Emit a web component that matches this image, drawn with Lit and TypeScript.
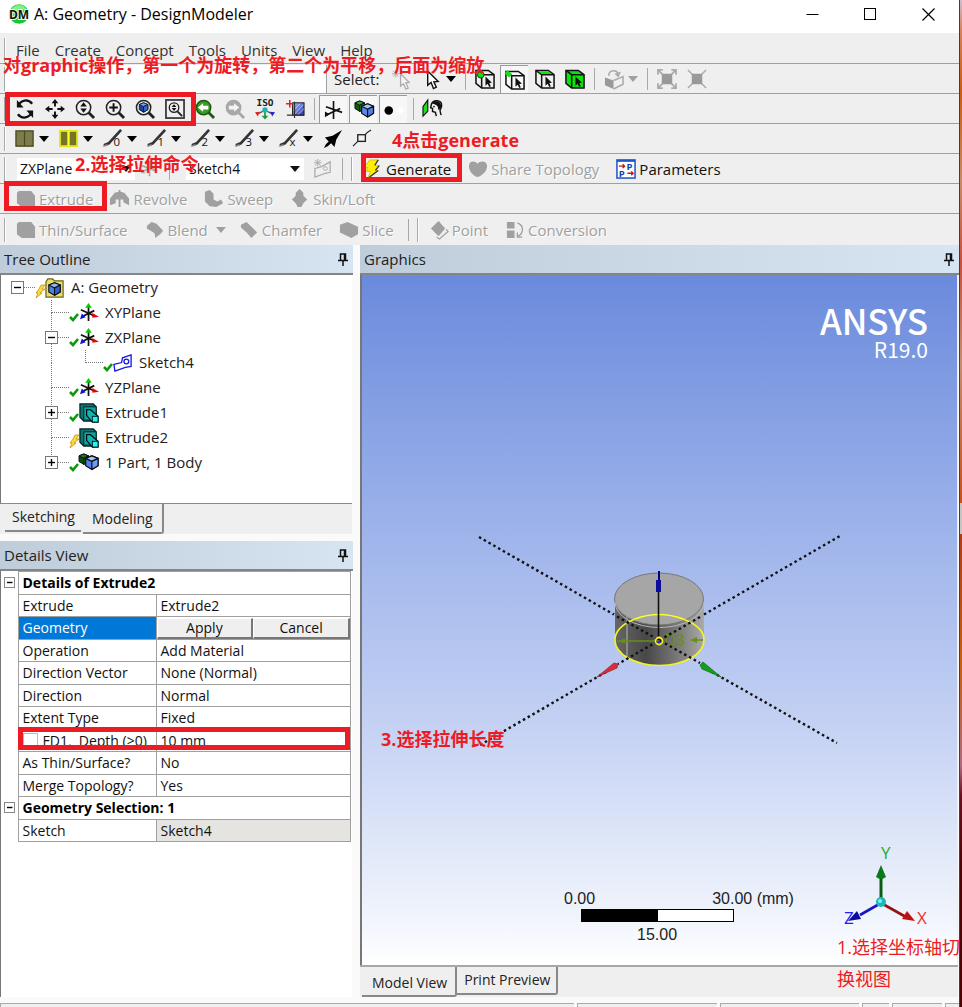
import { LitElement, html, svg, css, nothing } from "lit";
import { customElement } from "lit/decorators.js";

/* ---------- icon fragments ---------- */

const glass = (inner: unknown, ring = "#222", fill = "#efefef") => svg`
  <path d="M14 14 L20 20" stroke=${ring} stroke-width="3"/>
  <circle cx="9" cy="9" r="7.5" fill=${fill} stroke=${ring} stroke-width="1.6"/>${inner}`;

const cubeFace = (x: number, y: number, top: string, left: string, right: string, s = 1) => svg`
  <g transform="translate(${x} ${y}) scale(${s})" stroke="#111" stroke-width="1" stroke-linejoin="round">
    <path d="M5 0 L10 2 L10 8 L5 11 L0 8 L0 2Z" fill=${left}/>
    <path d="M5 0 L10 2 L5 4.5 L0 2Z" fill=${top}/>
    <path d="M5 4.5 L10 2 L10 8 L5 11Z" fill=${right}/>
  </g>`;

const selBox = (extra: unknown, fill = "none") => svg`
  <path d="M1 6 L1 1.5 L14 1.5 L20 6 L20 20 L7 20 L1 15Z" fill=${fill} stroke="#111" stroke-width="1.6"/>
  <path d="M1 1.5 L7 6 L20 6 M7 6 L7 20" fill="none" stroke="#111" stroke-width="1.6"/>${extra}
  <path d="M11 8 L11 17.5 L13.2 15.5 L15 19 L16.6 18 L15 14.8 L17.8 14.5Z" fill="#111"/>`;

const sketchLine = (n: string) => svg`
  <path d="M1 17 L6 15 L19 1" fill="none" stroke="#333" stroke-width="2.8"/>
  <path d="M0 18 L5 16.5" stroke="#888" stroke-width="1.5"/>
  <text x="11" y="18" font-size="12" font-family="Open Sans" fill="#111">${n}</text>`;

const icons: Record<string, unknown> = {
  rotate: svg`<path d="M3 8 C6 0 14 0 18 5" fill="none" stroke="#111" stroke-width="2.4"/><path d="M2 1 L2 9 L9 9Z" fill="#111"/>
    <path d="M18 13 C15 21 7 21 3 16" fill="none" stroke="#111" stroke-width="2.4"/><path d="M19 20 L19 12 L12 12Z" fill="#111"/>`,
  pan: svg`<path d="M10.5 4V8M10.5 13V17M4 10.5H8M13 10.5H17" stroke="#111" stroke-width="2"/>
    <path d="M10.5 0L7 4.5H14ZM10.5 21L7 16.5H14ZM0 10.5L4.5 7V14ZM21 10.5L16.5 7V14Z" fill="#111"/>`,
  zoomud: glass(svg`<path d="M9 3.5L12.5 8H5.5ZM9 14.5L12.5 10H5.5Z" fill="#111"/>`),
  zoomin: glass(svg`<path d="M9 4.5V13.5M4.5 9H13.5" stroke="#111" stroke-width="2"/>`),
  zoomcube: glass(cubeFace(4.5, 4, "#6fa0ff", "#1c3f9c", "#3568d8", 0.9)),
  zoomfit: svg`<rect x="1" y="1" width="19" height="19" fill="none" stroke="#333" stroke-width="1.8"/>
    <circle cx="9.5" cy="9" r="5" fill="none" stroke="#222" stroke-width="1.4"/><path d="M13 13L18 18" stroke="#222" stroke-width="2"/>
    <path d="M9.5 5.5L12 8.5H7ZM9.5 12.5L12 9.5H7Z" fill="#111"/>`,
  prev: glass(svg`<path d="M3 9L8.5 4.5V7H14V11H8.5V13.5Z" fill="#fff"/>`, "#1d5a12", "#3c9b22"),
  next: glass(svg`<path d="M15 9L9.5 4.5V7H4V11H9.5V13.5Z" fill="#f4f4f4"/>`, "#a8a8a8", "#a8a8a8"),
  iso: svg`<text x="10.5" y="7" text-anchor="middle" font-size="10" font-weight="bold" font-family="DejaVu Sans Mono" fill="#222">ISO</text>
    <path d="M10.5 12V19" stroke="#1a9a3a" stroke-width="1.8"/><path d="M10.5 21.5L7 17.5H14Z" fill="#1a9a3a"/>
    <circle cx="10.5" cy="11.5" r="2.8" fill="#17b6b6"/><path d="M8 13L4 15M13 13L17 15" stroke="#555" stroke-width="1.4"/>
    <path d="M0 14L5 13.5L3 18.5Z" fill="#d22"/><path d="M21 14L16 13.5L18 18.5Z" fill="#22c"/>`,
  lookat: svg`<defs><linearGradient id="lk" x2="1" y2="1"><stop offset="0" stop-color="#a9bcf5"/><stop offset="1" stop-color="#2a35b0"/></linearGradient></defs>
    <rect x="8" y="4" width="12" height="13" fill="url(#lk)" stroke="#111"/><path d="M10 16L19 6M13 17L20 10M9 12L16 5" stroke="#c4d2ff" stroke-width=".8"/>
    <path d="M10 3V20M2 17H20" stroke="#333" stroke-width="1.2"/><path d="M5 1V9M1 5H9" stroke="#d22" stroke-width="1.6"/>`,
  axes: svg`<path d="M10 1V20M2 7L19 13M17 9L2 16" stroke="#111" stroke-width="1.7"/><path d="M1 12V18L6 15Z" fill="#111"/>`,
  cubes: svg`${cubeFace(1, 1, "#39a339", "#0f5c0f", "#1a7a1a", 1)}${cubeFace(8, 4, "#9dc2ff", "#5a8af0", "#4f7fe8", 1.25)}`,
  dot: svg`<circle cx="5" cy="11" r="4.5" fill="#000"/><path d="M17 7L21 11L17 15L13 11Z" fill="#fff"/>`,
  face: svg`<path d="M0 8L5 1V13L0 18Z" fill="#1be01b" stroke="#111" stroke-width="1.2"/>
    <path d="M9 5C11 0 20 1 19.5 7C20 10 17 11 18 13L19 17M9 5L8 9L10 10V13L13 14L14 18" fill="none" stroke="#111" stroke-width="1.5"/>
    <path d="M10 4C12 1 19 2 19 7C19 10 17 12 16 11C16 7 14 6 10 5Z" fill="#111"/><circle cx="11.5" cy="8" r=".9" fill="#111"/>`,
  cursorstar: svg`<path d="M4 1V9M0 5H8M1 2L7 8M7 2L1 8" stroke="#aaa"/><path d="M9 5V18L12 15.5L14.5 21L17 20L14.5 14.5L18 14Z" fill="#f4f4f4" stroke="#aaa" stroke-width="1.3"/>`,
  cursor: svg`<path d="M6 2V17L9.5 14L12 20.5L15 19L12.5 13.5L17 13Z" fill="#fff" stroke="#111" stroke-width="1.5"/>`,
  selvertex: selBox(svg`<circle cx="6" cy="6" r="3.5" fill="#0be30b" stroke="#111" stroke-width=".8"/>`),
  seledge: selBox(svg`<path d="M1 2L6 6" stroke="#0be30b" stroke-width="4.5"/>`),
  selface: selBox(svg`<path d="M3 2.3H13.5L18 5.3H7.5Z" fill="#0be30b"/>`),
  selbody: selBox(nothing, "#0be30b"),
  extend: svg`<path d="M1 9L10 12V21L1 17Z" fill="#999"/><path d="M10 12L20 8V16L10 21M5 7C5 1 13 0 15 5" fill="none" stroke="#aaa" stroke-width="1.6"/><path d="M11 5L18 3L15 9Z" fill="#aaa"/>`,
  expand: svg`<rect x="5" y="5" width="11" height="11" fill="#999"/><path d="M1 6V1H6M15 1H20V6M20 15V20H15M6 20H1V15M1 1L6 6M20 1L15 6M20 20L15 15M1 20L6 15" fill="none" stroke="#aaa" stroke-width="1.8"/>`,
  shrink: svg`<path d="M1 1L20 20M20 1L1 20" stroke="#aaa" stroke-width="1.5"/><path d="M5 5H16V16H5Z" fill="#999"/>`,
  olive: svg`<rect x="1" y="2" width="18" height="16" fill="#7c7c4c" stroke="#4b4b1a" stroke-width="1.4"/><path d="M10 2V18" stroke="#4b4b1a" stroke-width="1.2"/>`,
  yellow: svg`<rect x="1" y="2" width="18" height="16" fill="#757528" stroke="#e6e61a" stroke-width="2"/><path d="M10 2V18" stroke="#ffff20" stroke-width="2.5"/>`,
  l0: sketchLine("0"), l1: sketchLine("1"), l2: sketchLine("2"), l3: sketchLine("3"), lx: sketchLine("x"),
  arrow: svg`<path d="M1 20L3 16L6 13L2 9L10 7L20 1L14 11L12 19L8.5 15L5 18Z" fill="#000"/>`,
  vertex: svg`<rect x="5" y="6" width="8" height="7" fill="none" stroke="#222" stroke-width="1.4"/><path d="M13 6Q15 3 19 1M5 13L0 18" stroke="#222" stroke-width="1.3" fill="none"/>`,
  plane: svg`<path d="M10 2V18M2 7L18 13M2 13L18 8" stroke="#aaa" stroke-width="1.8"/><path d="M1 10V15H6Z" fill="#aaa"/>`,
  newsketch: svg`<path d="M2 10L9 8L18 3V14L13 15L2 19Z" fill="none" stroke="#aaa" stroke-width="1.3"/><circle cx="13" cy="10" r="2" fill="none" stroke="#aaa"/><path d="M5 0V8M1 4H9M2 1L8 7M8 1L2 7" stroke="#aaa"/>`,
  bolt: svg`<path d="M7 1H16L12 7H17L13 12H16L5 20L8 13H3L5 9H1Z" fill="#ffee00" stroke="#c5b900" stroke-width=".8"/><path d="M16 1L12.500 6.500M17 7L13 12M16 12L7 19" stroke="#333" stroke-width="1.3"/>`,
  heart: svg`<path d="M1 7C1 2 7 1 10 5C13 1 20 2 20 7C20 13 15 17 10 19C5 17 1 13 1 7Z" fill="#a0a0a0"/>`,
  param: svg`<rect x="1" y="1" width="19" height="19" fill="#fff" stroke="#1f56c5" stroke-width="1.6"/><rect x="1" y="1" width="19" height="2" fill="#1f56c5"/>
    <text x="11" y="11.5" font-size="10" font-weight="bold" font-family="Open Sans" fill="#123fae">P</text><text x="3" y="18.5" font-size="10" font-weight="bold" font-family="Open Sans" fill="#123fae">P</text>
    <path d="M3 7.5H9M7 5.5L9 7.5L7 9.5M12 15H18M16 13L18 15L16 17" stroke="#c01818" stroke-width="1.4" fill="none"/>`,
  extrude: svg`<path d="M1 4L3 2H16L20 7V19H6L1 15Z" fill="#a0a0a0"/>`,
  revolve: svg`<path d="M0 17V10L5 4L9 3V1H11V3L15 4L20 10V17L14 14V11H11V19H9V11H6V15Z" fill="#a0a0a0"/>`,
  sweep: svg`<path d="M1 3L6 1L10 5V11L14 13L18 11L20 15L13 19L6 18L1 13Z" fill="#a0a0a0"/>`,
  loft: svg`<path d="M10 0L14 4V7L18 11L14 15L12 19H8L6 15L2 11L6 7V4Z" fill="#a0a0a0"/>`,
  blend: svg`<path d="M2 6L7 2L12 4L19 11L17 14L11 19L10 14L2 9Z" fill="#a0a0a0"/>`,
  chamfer: svg`<path d="M2 5L8 2L19 13L13 19L8 13L2 8Z" fill="#a0a0a0"/>`,
  slice: svg`<path d="M1 5L9 2L20 7V15L13 19L1 13Z" fill="#a0a0a0"/>`,
  point: svg`<path d="M10 1L17 9L10 17L2 9Z" fill="#a0a0a0"/><path d="M18 10L20 12L11 20L8 18" fill="none" stroke="#a0a0a0" stroke-width="1.3"/>`,
  conv: svg`<path d="M2 2H10V9H2ZM2 11H10V19H2Z" fill="#a0a0a0"/><path d="M13 3C20 6 20 13 14 17M13 13V18H18" fill="none" stroke="#a0a0a0" stroke-width="1.4"/>`,
  folder: svg`<path d="M1 4L3 1H8L10 3H19V20H1Z" fill="#e9de6c" stroke="#6b6420" stroke-width="1.3"/>${cubeFace(4, 5, "#8db8ff", "#4f80ea", "#2f5fd0", 1.2)}`,
  triad: svg`<path d="M10 4V19M2 7L17 14M16 8L4 14" stroke="#111" stroke-width="1.8"/><path d="M10 0L6.5 5H13.5Z" fill="#0c0"/><path d="M21 14.500L14 10.500V15.500Z" fill="#e00"/><path d="M1 17L3 11L7 15Z" fill="#11d"/>`,
  sketch: svg`<path d="M1 12L9 10L10 5L19 2V14L13 15L2 19Z" fill="none" stroke="#1818e0" stroke-width="1.4"/><circle cx="14" cy="9" r="2.5" fill="none" stroke="#1818e0" stroke-width="1.4"/>`,
  solid: svg`<path d="M1 1H15L18 4V19H5L1 15Z" fill="#0e7373" stroke="#022" stroke-width="1.3"/><path d="M5 4H18V18H5Z" fill="#14a0a0" stroke="#022"/>
    <path d="M8 7H12L20 14V20H14L8 13Z" fill="#12b4b4" stroke="#011" stroke-width="1.3"/><rect x="14" y="14" width="6" height="6" fill="#29f2f2" stroke="#022"/>`,
  body: svg`${cubeFace(0, 1, "#1c7a1c", "#0b4d0b", "#0f5f0f", 1)}${cubeFace(7, 3, "#a8c6ff", "#4f80ea", "#6f9bf5", 1.3)}`,
};

const icon = (name: string) => html`<svg class="icon" viewBox="0 0 21 21" aria-hidden="true">${icons[name]}</svg>`;
const caret = html`<svg class="caret" viewBox="0 0 10 6" aria-hidden="true"><path d="M0 0H10L5 6Z" fill="currentColor"/></svg>`;
const pin = html`<svg class="pin" viewBox="0 0 10 13" aria-hidden="true"><path d="M2.5 7V1H7.5V7M6.5 1V7M0 7.5H10M5 8V13" fill="none" stroke="#111" stroke-width="1.5"/></svg>`;

const tool = (name: string, title: string, pressed = false) =>
  html`<button class="tool ${pressed ? "pressed" : ""}" aria-label=${title}>${icon(name)}</button>`;
const drop = (name: string, title: string) =>
  html`<button class="tool wide" aria-label=${title}>${icon(name)}${caret}</button>`;
const cmd = (name: string, label: string, off = true, menu = false) =>
  html`<button class="cmd" ?disabled=${off}>${icon(name)}<span>${label}</span>${menu ? caret : nothing}</button>`;

/* ---------- data ---------- */

type Lane = "none" | "open" | "close" | "plus" | "line" | "last" | "pass" | "lastplus";
interface Node { lanes: Lane[]; status: "ok" | "bolt"; icon: string; label: string }

const tree: Node[] = [
  { lanes: ["open"], status: "bolt", icon: "folder", label: "A: Geometry" },
  { lanes: ["none", "line"], status: "ok", icon: "triad", label: "XYPlane" },
  { lanes: ["none", "close"], status: "ok", icon: "triad", label: "ZXPlane" },
  { lanes: ["none", "pass", "last"], status: "ok", icon: "sketch", label: "Sketch4" },
  { lanes: ["none", "line"], status: "ok", icon: "triad", label: "YZPlane" },
  { lanes: ["none", "plus"], status: "ok", icon: "solid", label: "Extrude1" },
  { lanes: ["none", "line"], status: "bolt", icon: "solid", label: "Extrude2" },
  { lanes: ["none", "lastplus"], status: "ok", icon: "body", label: "1 Part, 1 Body" },
];

const lane = (kind: Lane) => {
  const up = kind !== "none" && kind !== "open";
  const down = ["line", "close", "plus", "pass"].includes(kind);
  const across = kind !== "none" && kind !== "pass";
  const box = ["open", "close", "plus", "lastplus"].includes(kind);
  const plus = kind === "plus" || kind === "lastplus";
  return html`<svg class="lane" viewBox="0 0 34 25" aria-hidden="true">
    <g stroke="#777" stroke-dasharray="1 1">
      ${up ? svg`<path d="M16.5 0V13"/>` : nothing}
      ${down ? svg`<path d="M16.5 13V25"/>` : nothing}
      ${across ? svg`<path d="M17 12.5H34"/>` : nothing}
    </g>
    ${box ? svg`<rect x="10.5" y="6.5" width="12" height="12" fill="#fff" stroke="#777"/><path d="M13 12.5H20" stroke="#000" stroke-width="1.4"/>` : nothing}
    ${plus ? svg`<path d="M16.5 9V16" stroke="#000" stroke-width="1.4"/>` : nothing}
  </svg>`;
};

const statusIcon = (s: string) => html`<svg class="status" viewBox="0 0 11 14" aria-hidden="true">
  ${s === "ok"
    ? svg`<path d="M1 8L4 11L9 5" fill="none" stroke="#0a9a0a" stroke-width="2.6"/>`
    : svg`<path d="M6 1H10L7 5H10L5 9H7L1 14L3 9H1L4 5Z" fill="#ffd83a" stroke="#c9940a" stroke-width=".8"/>`}
</svg>`;

const props: [string, string][] = [
  ["Operation", "Add Material"],
  ["Direction Vector", "None (Normal)"],
  ["Direction", "Normal"],
  ["Extent Type", "Fixed"],
];

@customElement("app-root")
export class AppRoot extends LitElement {
  static styles = css`
    :host {
      display: flex; flex-direction: column; position: relative; box-sizing: border-box;
      min-height: 100vh; padding-right: 3px; background: #fafafa; overflow: hidden;
      font: 15px/20px "Open Sans", "Noto Sans CJK SC", sans-serif; color: #222;
    }
    button, select, input { font: inherit; color: inherit; margin: 0; border: 0; padding: 0; background: none; border-radius: 0; }
    svg { display: block; flex: none; overflow: visible; }
    .icon { width: 20px; height: 20px; }
    .caret { width: 10px; height: 6px; }
    .desktop { position: absolute; top: 0; right: 0; bottom: 0; width: 2px; border-left: 1px solid #4a3a38;
      background: linear-gradient(#cdbcd0 0, #d8825c 3%, #cc5c10 9%, #c98a64 18%, #c8503c 26%, #c98c70 36%, #c8501c 50%, #c8c4c4 50%, #c8c4c4 53%, #b03c18 53%, #c86010 66%, #b06a80 76%, #6a1020 79%, #4c0404 86%, #4c0404 100%); }

    .title { display: flex; align-items: center; box-sizing: border-box; height: 33px; padding: 0 2px 5px 9px; background: #fff; font-size: 16px; color: #000; }
    .title .logo { width: 20px; height: 20px; margin-right: 5px; }
    .title h1 { font: inherit; margin: 0 auto 0 0; }
    .title button { width: 58px; height: 28px; display: grid; place-items: center; }
    .title button svg { width: 13px; height: 13px; }

    .bar { display: flex; align-items: center; box-sizing: border-box; height: 30px; padding: 1px 0 0 10px; border-bottom: 1px solid #a0a0a0; background: #efefef; position: relative; }
    .bar.end { border-bottom-color: #efefef; height: 31px; }
    .bar.menu { height: 31px; gap: 14px; padding-top: 3px; padding-left: 16px; color: #333; }
    .bar.menu button { padding-right: 1px; }
    .grip { width: 1px; height: 24px; background: #a8a8a8; border-right: 1px solid #fff; margin: 0 4px; flex: none; }
    .bar > .grip:first-child { position: absolute; left: 0; }
    .sep { width: 1px; height: 22px; background: #a8a8a8; margin: 0 4px; flex: none; }
    .tool { width: 30px; height: 28px; display: flex; align-items: center; justify-content: center; flex: none; color: #000; }
    .tool.wide { width: 44px; gap: 4px; }
    .tool.pressed { width: 28px; margin-right: 2px; background: #f7f7f7; border-left: 1px solid #999; border-top: 1px solid #999; box-sizing: border-box; }
    .tool.dim { color: #a0a0a0; }
    .blank { width: 322px; height: 28px; background: #fff; margin-left: -5px; border-right: 1px solid #a0a0a0; box-sizing: border-box; flex: none; }
    .lbl { margin: 0 8px 0 7px; }
    .cmds { display: flex; align-items: center; gap: 17px; padding-left: 6px; }
    .cmds.solo { padding-right: 10px; }
    .cmd { display: flex; align-items: center; gap: 3px; color: #111; }
    .cmd .caret { margin: 0 -4px 0 5px; }
    .cmd:disabled { color: #a0a0a0; text-shadow: 1px 1px #fff; }
    .combo { display: flex; align-items: center; position: relative; height: 22px; font-size: 14px; background: #fff; color: #111; margin: 0 4px 0 12px; }
    .combo select { appearance: none; width: 118px; height: 22px; padding-left: 3px; }
    .combo .caret { position: absolute; right: 4px; pointer-events: none; }
    .combo.planes { margin: 0 0 0 7px; }

    .work { flex: 1; display: grid; grid-template-columns: 353px minmax(0, 1fr); column-gap: 7px; min-height: 0; }
    .left, .right { display: flex; flex-direction: column; }
    .head { display: flex; align-items: center; justify-content: space-between; height: 28px; flex: none; margin: 0; padding: 0 5px 0 4px;
      border-bottom: 2px solid #858585; background: linear-gradient(90deg, #bfccd9, #d7e5f2); }
    .head h2 { font: inherit; margin: 0; }
    .pin { width: 10px; height: 13px; }
    .tree { height: 228px; border-left: 1px solid #777; background: #fff; margin: 0 1px 0 0; padding: 0; list-style: none; }
    .tree li { display: flex; align-items: center; height: 25px; }
    .tree .lane { width: 34px; height: 25px; }
    .status { width: 11px; height: 14px; margin-top: 6px; }
    .tree .icon { margin-left: -1px; }
    .tree span { margin: 0 0 2px 6px; }
    .tabs { display: flex; align-items: flex-start; height: 30px; border-top: 1px solid #8a8a8a; background: #efefef; padding-left: 5px; font-size: 14px; flex: none; margin-right: 1px; }
    .tab { box-sizing: border-box; height: 28px; padding: 2px 6px 2px 7px; border-bottom: 2px solid #888; background: #efefef; }
    .tab.on { height: 30px; margin-left: 2px; padding: 4px 9px 2px; border-right: 2px solid #888; border-bottom-right-radius: 3px; }
    .details { flex: 1; border-left: 1px solid #777; background: #fff; margin-right: 1px; }
    .gap { height: 7px; }

    table { border-collapse: collapse; width: 350px; font-size: 14px; line-height: 18px; color: #111; table-layout: fixed; }
    tr { height: 22px; }
    tr:nth-child(odd) { height: 23px; }
    td, th { padding: 0 0 0 4px; border: 1px solid #a0a0a0; text-align: left; font-weight: normal; box-sizing: border-box; white-space: nowrap; }
    th.group { font-weight: bold; color: #000; }
    td.gut { border: 0; padding: 0 0 0 3px; }
    th.sel { background: #0078d7; color: #fff; }
    td.pair { padding: 0; }
    .pair div { display: flex; }
    .pair button { flex: 1; height: 21px; background: #efefef; border: 1px solid; border-color: #fff #777 #777 #fff; border-width: 1px 2px 2px 1px; line-height: 16px; }
    td.ro { background: #e6e4e0; }
    th.check label { display: flex; align-items: center; gap: 5px; white-space: pre; }
    th.check input { appearance: none; width: 15px; height: 15px; border: 1px solid #bbb; background: #fff; }

    .canvas { flex: 1; position: relative; border-left: 2px solid #777; border-right: 1px solid #eee; margin-right: 1px;
      background: linear-gradient(#6a8adc 0, #9cb2ea 36%, #c4d1f3 65%, #f0f4fc 93%, #fff 100%); min-height: 500px; }
    .brand { position: absolute; right: 29px; top: 25px; text-align: right; color: #fff; font: 500 35px/40px "Noto Sans CJK SC", "Open Sans", sans-serif; }
    .brand small { display: block; font: 21px/18px "Noto Sans CJK SC", sans-serif; }
    .model { position: absolute; left: 50%; top: 50%; width: 364px; height: 212px; margin: -86px 0 0 -183px; }
    .scale { position: absolute; left: 202px; bottom: 20px; width: 250px; font: 16px/20px "Liberation Sans", sans-serif; color: #222; }
    .scale .ends { display: flex; gap: 117px; }
    .scale .rule { display: flex; width: 151px; height: 11px; border: 1px solid #000; margin-left: 17px; background: #fff; }
    .scale .rule i { width: 50%; background: #000; }
    .scale .mid { display: block; margin: 3px 0 0 73px; }
    .axis { position: absolute; right: 25px; bottom: 36px; width: 92px; height: 84px; }
    .tabs.bottom { border-top: 2px solid #a8a8a8; padding-left: 0; }
    .tabs.bottom .tab { border-right: 2px solid #888; border-bottom-right-radius: 3px; }
    .tabs.bottom .tab.on { padding: 5px 8px 2px 10px; }
    .foot { display: grid; grid-template-columns: 574px 2fr 2fr 27px 50px 14px; gap: 3px; height: 4px; margin-top: 6px; background: #fafafa; }
    .foot i { background: #efefef; border-top: 1px solid #aaa; border-left: 1px solid #aaa; }

    .note { position: absolute; color: #ed1c24; font: bold 18px/24px "Open Sans", "Noto Sans CJK SC", sans-serif; margin: 0; white-space: nowrap; }
    .n1 { left: 837px; top: 931px; font-weight: normal; line-height: 32px; }
    .n2 { left: 75px; top: 152px; }
    .n3 { left: 381px; top: 727px; }
    .n4 { left: 392px; top: 128px; }
    .n5 { left: 3px; top: 53px; }
    .ring { position: absolute; box-sizing: border-box; border: 5px solid #ed1c24; pointer-events: none; }
    .r1 { left: 5px; top: 92px; width: 191px; height: 34px; }
    .r2 { left: 4px; top: 181px; width: 103px; height: 30px; }
    .r3 { left: 361px; top: 153px; width: 101px; height: 29px; }
    .r4 { left: 18px; top: 727px; width: 332px; height: 23px; }
  `;

  render() {
    return html`
      <header class="title">
        <svg class="logo" viewBox="0 0 20 20" aria-hidden="true">
          <circle cx="10" cy="10" r="9.8" fill="#18c832"/><path d="M2 6A9 9 0 0 1 18 6Z" fill="#7df08a"/>
          <text x="10" y="14.5" text-anchor="middle" font-family="Open Sans" font-weight="bold" font-size="12" fill="#111" stroke="#e8ffe8" stroke-width="2" paint-order="stroke">DM</text>
        </svg>
        <h1>A: Geometry - DesignModeler</h1>
        <button aria-label="Minimize"><svg viewBox="0 0 13 13"><path d="M.5 6.5H12.5" stroke="#000"/></svg></button>
        <button aria-label="Maximize"><svg viewBox="0 0 13 13"><rect x=".5" y=".5" width="11" height="11" fill="none" stroke="#000"/></svg></button>
        <button aria-label="Close"><svg viewBox="0 0 13 13"><path d="M.5 .5L12.5 12.5M12.5 .5L.5 12.5" stroke="#000" stroke-width="1.2"/></svg></button>
      </header>
      <nav class="bar menu"><i class="grip"></i>
        ${["File", "Create", "Concept", "Tools", "Units", "View", "Help"].map((m) => html`<button>${m}</button>`)}
      </nav>
      <div class="bar"><i class="grip"></i><i class="blank"></i>
        <span class="lbl">Select:</span>
        ${tool("cursorstar", "New selection")}${drop("cursor", "Select mode")}<i class="sep"></i>
        ${tool("selvertex", "Points")}${tool("seledge", "Edges", true)}${tool("selface", "Faces")}${tool("selbody", "Bodies")}<i class="sep"></i>
        <button class="tool wide dim" aria-label="Extend">${icon("extend")}${caret}</button><i class="sep"></i>
        ${tool("expand", "Expand")}${tool("shrink", "Shrink")}
      </div>
      <div class="bar"><i class="grip"></i>
        ${tool("rotate", "Rotate")}${tool("pan", "Pan")}${tool("zoomud", "Zoom")}${tool("zoomin", "Box zoom")}${tool("zoomcube", "Zoom to fit")}
        ${tool("zoomfit", "Magnifier")}${tool("prev", "Previous view")}${tool("next", "Next view")}${tool("iso", "Isometric")}${tool("lookat", "Look at")}<i class="sep"></i>
        ${tool("axes", "Planes", true)}${tool("cubes", "Models", true)}${tool("dot", "Points", true)}<i class="sep"></i>${tool("face", "Look at face")}
      </div>
      <div class="bar"><i class="grip"></i>
        ${drop("olive", "Face color")}${drop("yellow", "Edge color")}${["l0", "l1", "l2", "l3", "lx"].map((l) => drop(l, "Edge joints"))}
        ${tool("arrow", "Edge direction")}${tool("vertex", "Vertices")}
      </div>
      <div class="bar"><i class="grip"></i>
        <span class="combo planes"><select aria-label="Plane"><option>ZXPlane</option></select>${caret}</span>
        ${tool("plane", "New plane")}<i class="sep"></i>
        <span class="combo"><select aria-label="Sketch"><option>Sketch4</option></select>${caret}</span>
        ${tool("newsketch", "New sketch")}<i class="sep"></i><i class="grip"></i>
        <span class="cmds">${cmd("bolt", "Generate", false)}${cmd("heart", "Share Topology")}${cmd("param", "Parameters", false)}</span>
      </div>
      <div class="bar"><i class="grip"></i>
        <span class="cmds">${cmd("extrude", "Extrude")}${cmd("revolve", "Revolve")}${cmd("sweep", "Sweep")}${cmd("loft", "Skin/Loft")}</span>
      </div>
      <div class="bar end"><i class="grip"></i>
        <span class="cmds solo">${cmd("extrude", "Thin/Surface")}${cmd("blend", "Blend", true, true)}${cmd("chamfer", "Chamfer")}${cmd("slice", "Slice")}</span>
        <i class="sep"></i><i class="grip"></i>
        <span class="cmds">${cmd("point", "Point")}${cmd("conv", "Conversion")}</span>
      </div>

      <main class="work">
        <section class="left">
          <div class="head"><h2>Tree Outline</h2>${pin}</div>
          <ul class="tree">
            ${tree.map((n) => html`<li>${n.lanes.map(lane)}${statusIcon(n.status)}${icon(n.icon)}<span>${n.label}</span></li>`)}
          </ul>
          <div class="tabs"><button class="tab">Sketching</button><button class="tab on">Modeling</button></div>
          <div class="gap"></div>
          <div class="head"><h2>Details View</h2>${pin}</div>
          <div class="details">${this.details()}</div>
        </section>
        <section class="right">
          <div class="head"><h2>Graphics</h2>${pin}</div>
          <div class="canvas">
            <div class="brand">ANSYS<small>R19.0</small></div>
            ${this.model()}
            <div class="scale"><div class="ends"><span>0.00</span><span>30.00 (mm)</span></div><div class="rule"><i></i></div><span class="mid">15.00</span></div>
            ${this.axis()}
          </div>
          <div class="tabs bottom"><button class="tab on">Model View</button><button class="tab">Print Preview</button></div>
        </section>
      </main>
      <footer class="foot"><i></i><i></i><i></i><i></i><i></i><i></i></footer>
      <div class="desktop"></div>

      <i class="ring r1"></i><i class="ring r2"></i><i class="ring r3"></i><i class="ring r4"></i>
      <p class="note n5">对graphic操作，第一个为旋转，第二个为平移，后面为缩放</p>
      <p class="note n4">4点击generate</p>
      <p class="note n2">2.选择拉伸命令</p>
      <p class="note n3">3.选择拉伸长度</p>
      <p class="note n1">1.选择坐标轴切<br>换视图</p>
    `;
  }

  private details() {
    const fold = html`<svg width="12" height="12" viewBox="0 0 12 12" aria-hidden="true"><rect x=".5" y=".5" width="10" height="10" fill="#fff" stroke="#888"/><path d="M3 5.5H8.5" stroke="#000" stroke-width="1.4"/></svg>`;
    const row = (a: string, b: string) => html`<tr><td class="gut"></td><th>${a}</th><td>${b}</td></tr>`;
    return html`<table>
      <colgroup><col width="17"><col width="138"><col></colgroup>
      <tbody>
        <tr><td class="gut">${fold}</td><th class="group" colspan="2">Details of Extrude2</th></tr>
        ${row("Extrude", "Extrude2")}
        <tr><td class="gut"></td><th class="sel">Geometry</th><td class="pair"><div><button>Apply</button><button>Cancel</button></div></td></tr>
        ${props.map(([a, b]) => row(a, b))}
        <tr><td class="gut"></td><th class="check"><label><input type="checkbox">FD1,  Depth (&gt;0)</label></th><td>10 mm</td></tr>
        ${row("As Thin/Surface?", "No")}
        ${row("Merge Topology?", "Yes")}
        <tr><td class="gut">${fold}</td><th class="group" colspan="2">Geometry Selection: 1</th></tr>
        <tr><td class="gut"></td><th>Sketch</th><td class="ro">Sketch4</td></tr>
      </tbody>
    </table>`;
  }

  private model() {
    return html`<svg class="model" viewBox="477 534 364 212" role="img" aria-label="Cylinder with extrude preview">
      <defs><linearGradient id="side"><stop offset="0" stop-color="#666"/><stop offset=".35" stop-color="#484848"/><stop offset=".75" stop-color="#808080"/><stop offset="1" stop-color="#aaa"/></linearGradient></defs>
      <path d="M615 600V640A44.5 25.5 0 0 0 704 640V600Z" fill="url(#side)"/>
      <ellipse cx="659" cy="599" rx="44.5" ry="26" fill="#a6a6a6" stroke="#777"/>
      <path d="M615 602A44.5 25.5 0 0 0 704 602" fill="none" stroke="#b8b8b8"/>
      <path d="M627 616V660" stroke="#999" stroke-width="1.5"/>
      <path d="M635 619Q659 610 683 619" fill="none" stroke="#ffff20" stroke-width="1.6"/>
      <path d="M635 619C620 625 615 633 615 640A44.5 25.5 0 0 0 704 640C704 633 699 625 683 619" fill="none" stroke="#f5f51a" stroke-width="1.6"/>
      <path d="M617 641H659M692 640H703" stroke="#6b8e14" stroke-width="1.3"/>
      <path d="M618 641L625 638.5V643.5ZM690 640L697 637V643Z" fill="#6b8e14"/>
      <text x="664" y="646" font-size="16" font-family="Liberation Sans" fill="#6b8e14">D3</text>
      <g stroke="#111" stroke-width="2.4" stroke-dasharray="2.5 3"><path d="M479 537L614 614.5M704 614.5L840 536M606 672L480 745M712 672L837 743"/><path d="M617 616.5L700 663M700 617L618 664"/></g>
      <path d="M658.5 590V640" stroke="#111" stroke-width="1.6"/><path d="M659 571V592" stroke="#00008c" stroke-width="2"/><rect x="656" y="580" width="5" height="12" fill="#0c0c9c"/>
      <path d="M597 677L614 663L618 664L617 668Z" fill="#d8303a" stroke="#8c1018" stroke-width=".6"/>
      <path d="M721 677L703 662L700 665L702 669Z" fill="#12a01c" stroke="#085c0e" stroke-width=".6"/>
      <circle cx="659" cy="641" r="3.5" fill="none" stroke="#ffee20" stroke-width="1.8"/><circle cx="659" cy="642" r="1.4" fill="#23f"/>
    </svg>`;
  }

  private axis() {
    return html`<svg class="axis" viewBox="0 0 92 84" role="img" aria-label="Axis triad">
      <path d="M41 56V30" stroke="#0a5c14" stroke-width="3"/><path d="M41 20L36 32Q41 36 46 32Z" fill="#0a7a18"/>
      <path d="M41 58L20 70" stroke="#1616c8" stroke-width="2.6"/><path d="M8 76L17 66L21 74Z" fill="#0c0c9c"/>
      <path d="M41 58L66 72" stroke="#981010" stroke-width="2.6"/><path d="M75 76L62 74L67 66Z" fill="#c01010"/>
      <circle cx="41" cy="57" r="5" fill="#19b8b8"/><circle cx="40" cy="56" r="2" fill="#7ef0f0"/>
      <g font-size="17" font-family="Open Sans"><text x="41" y="14" fill="#20b030">Y</text><text x="4" y="79" fill="#2222f0">Z</text><text x="77" y="79" fill="#f03030">X</text></g>
    </svg>`;
  }
}
